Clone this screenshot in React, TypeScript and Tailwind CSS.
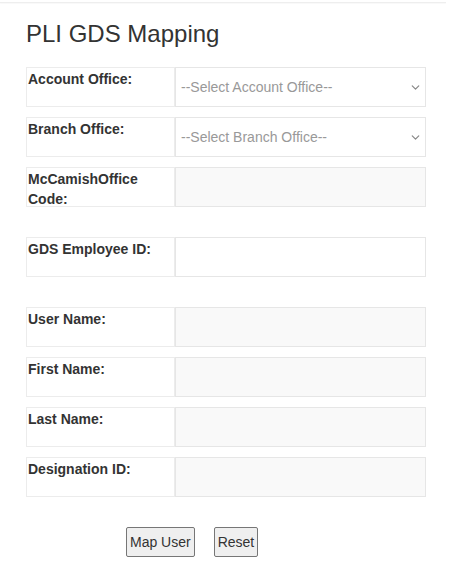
import { ChevronDown } from 'lucide-react';

type Field = {
  label: string;
  kind: 'select' | 'input' | 'readonly';
  placeholder?: string;
  gap?: string;
};

const fields: Field[] = [
  { label: 'Account Office:', kind: 'select', placeholder: '--Select Account Office--' },
  { label: 'Branch Office:', kind: 'select', placeholder: '--Select Branch Office--' },
  { label: 'McCamishOffice Code:', kind: 'readonly', gap: 'mb-[30px]' },
  { label: 'GDS Employee ID:', kind: 'input', gap: 'mb-[30px]' },
  { label: 'User Name:', kind: 'readonly' },
  { label: 'First Name:', kind: 'readonly' },
  { label: 'Last Name:', kind: 'readonly' },
  { label: 'Designation ID:', kind: 'readonly' },
];

function FieldRow({ field }: { field: Field }) {
  return (
    <div className={`flex h-[40px] ${field.gap ?? 'mb-[10px]'}`}>
      <div className="w-[149px] shrink-0 border border-[#ececec] pl-[1px] pt-[1px] text-[14px] font-bold leading-[20px] text-[#333]">
        {field.label}
      </div>
      <div
        className={`flex flex-1 items-center border border-[#e6e6e6] ${
          field.kind === 'readonly' ? 'bg-[#f9f9f9]' : 'bg-white'
        }`}
      >
        {field.kind === 'select' && (
          <div className="flex w-full items-center justify-between pl-[5px] pr-[3px]">
            <span className="text-[14px] text-[#999]">{field.placeholder}</span>
            <ChevronDown className="h-[13px] w-[13px] text-[#888]" strokeWidth={2.25} />
          </div>
        )}
      </div>
    </div>
  );
}

export default function App() {
  return (
    <div className="h-[578px] w-[451px] bg-white font-['Liberation_Sans',Arial,sans-serif]">
      <div className="pt-[2px]">
        <div className="h-px w-[446px] bg-[#eeeeee] shadow-[0_1px_1px_rgba(0,0,0,0.03)]" />
      </div>
      <div className="px-[26px]">
        <h1 className="mt-[16px] mb-[18px] text-[24px] leading-[30px] text-[#333]">PLI GDS Mapping</h1>
        <div className="w-[400px]">
          {fields.map((f) => (
            <FieldRow key={f.label} field={f} />
          ))}
        </div>
        <div className="mt-[30px] flex gap-[19px] pl-[100px]">
          <button className="h-[30px] rounded-[2px] border border-[#767676] bg-[#efefef] px-[3px] text-[14px] text-[#333]">
            Map User
          </button>
          <button className="h-[30px] rounded-[2px] border border-[#767676] bg-[#efefef] px-[3px] text-[14px] text-[#333]">
            Reset
          </button>
        </div>
      </div>
    </div>
  );
}
